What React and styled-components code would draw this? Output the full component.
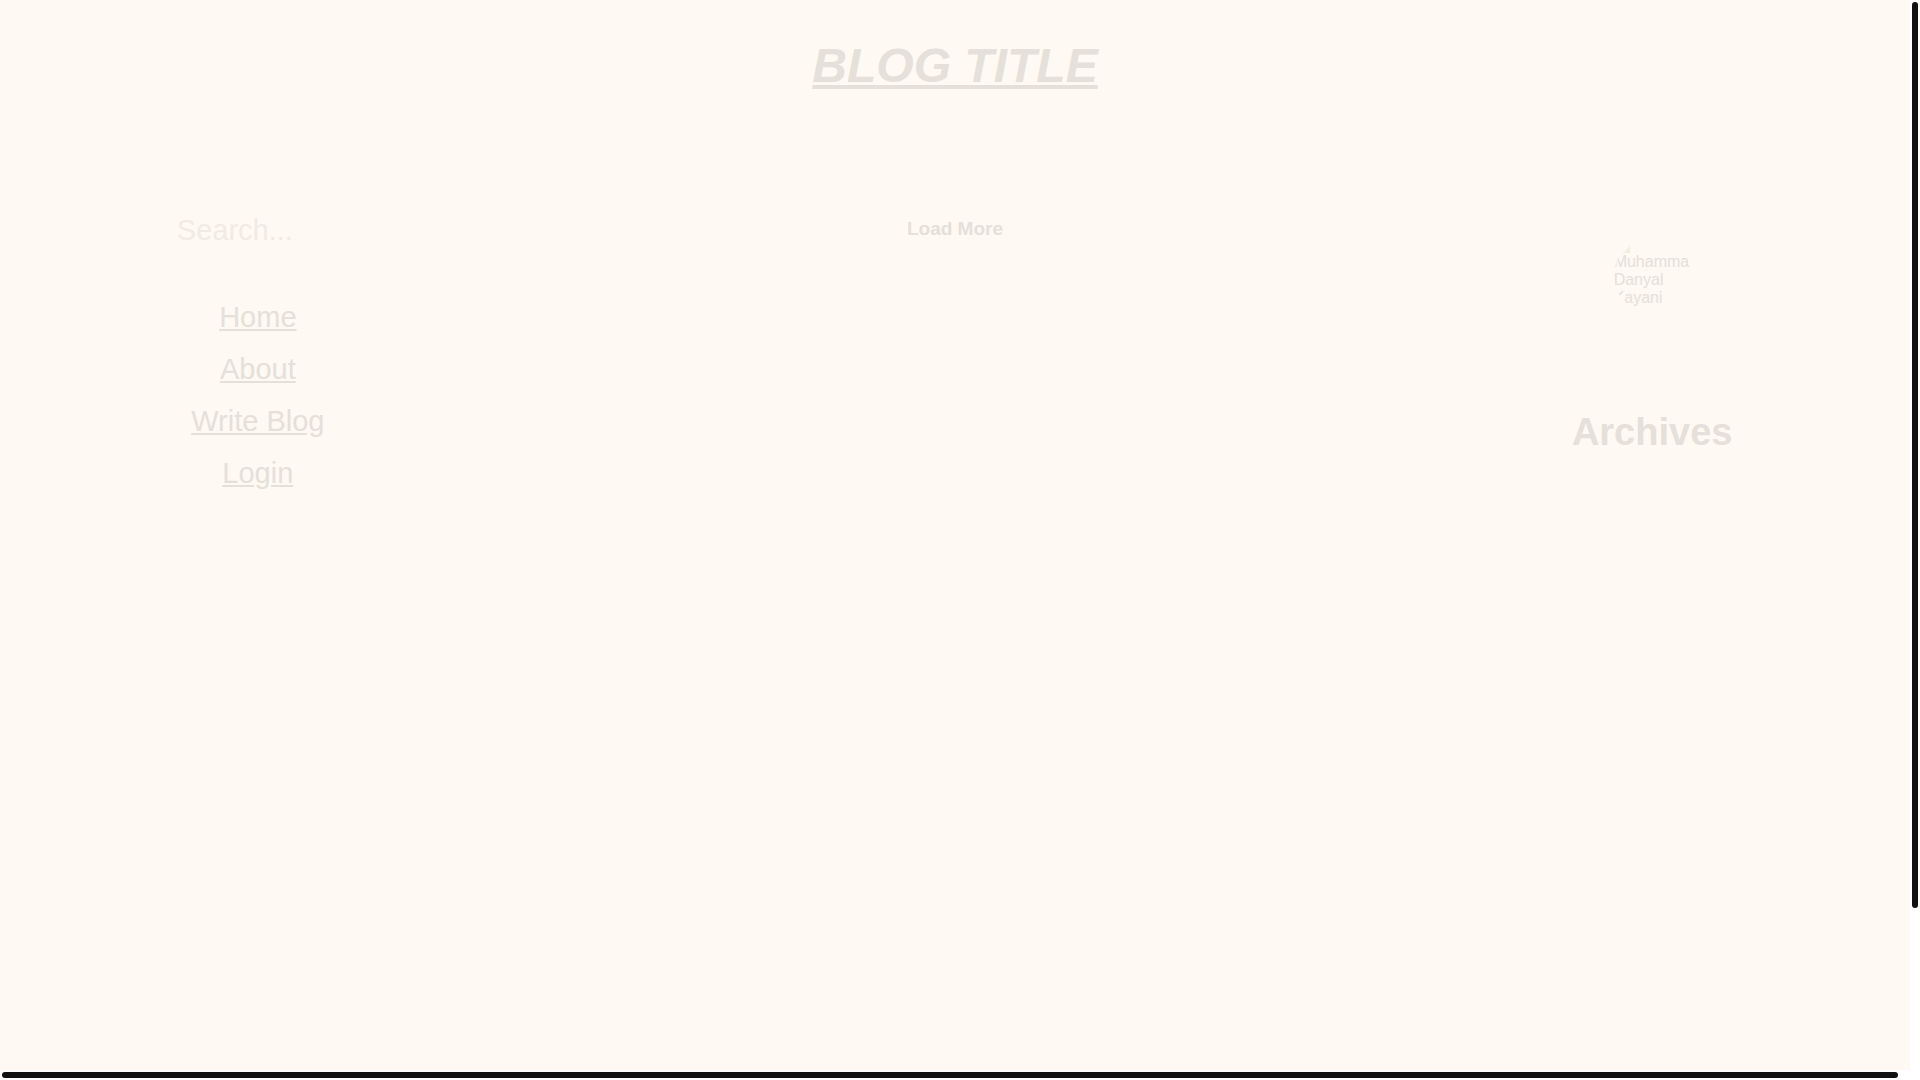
import React from 'react';
import styled, { createGlobalStyle } from 'styled-components';

const GlobalStyle = createGlobalStyle`
    * {
        box-sizing: border-box;
    }

    body {
        margin: 0;
        background-color: #fff;
        color: #e5e0da;
        font-family: "Liberation Sans", Arial, sans-serif;
        font-size: 16px;
    }
`;

// Styled Components
const Window = styled.div`
    display: grid;
    grid-template-columns: 1fr 10px;
    grid-template-rows: 1fr 10px;
    height: 100vh;
`;

const Page = styled.div`
    background-color: #fef9f2;
    overflow: hidden;
`;

const ScrollTrack = styled.div`
    padding: 2px;
`;

const ScrollThumb = styled.div`
    width: ${props => props.$horizontal ? '99.5%' : '100%'};
    height: ${props => props.$horizontal ? '100%' : '85%'};
    border-radius: 3px;
    background-color: #111;
`;

const Header = styled.header`
    padding: 38px 0 116px;
    text-align: center;
`;

const Title = styled.h1`
    margin: 0;
    font-size: 48px;
    font-style: italic;
    line-height: 56px;
    text-decoration: underline;
`;

const Columns = styled.div`
    display: grid;
    grid-template-columns: 27fr 46fr 27fr;
`;

const Sidebar = styled.aside`
    display: flex;
    flex-direction: column;
    align-items: center;
`;

const SearchInput = styled.input`
    width: 178px;
    height: 40px;
    padding: 0 8px;
    border: 0;
    outline: 0;
    background: transparent;
    color: inherit;
    font-family: inherit;
    font-size: 29px;

    &::placeholder {
        color: #f0ebe5;
        opacity: 1;
    }
`;

const NavLinks = styled.ul`
    display: flex;
    flex-direction: column;
    align-items: center;
    gap: 19px;
    list-style: none;
    margin: 51px 0 0;
    padding: 0;
    font-size: 29px;
    line-height: 33px;

    a {
        color: inherit;
    }
`;

const Posts = styled.main`
    display: flex;
    justify-content: center;
    align-items: flex-start;
    padding-top: 7px;
`;

const LoadButton = styled.button`
    padding: 0 16px;
    border: 0;
    background: transparent;
    color: inherit;
    cursor: pointer;
    font-family: inherit;
    font-size: 19px;
    font-weight: bold;
    line-height: 24px;
`;

const Avatar = styled.div`
    width: 77px;
    height: 77px;
    margin: 27px 0 96px;
    border-radius: 50%;
    overflow: hidden;
    line-height: 18px;

    svg {
        display: block;
    }
`;

const ArchivesTitle = styled.h2`
    margin: 0;
    font-size: 38px;
    line-height: 44px;
`;

const PictureIcon = () => (
    <svg width="16" height="16" viewBox="0 0 16 16" aria-hidden="true">
        <path d="M1 1h10l4 4v10H1z" fill="#fefaf0" />
        <path d="M11 1v4h4z" fill="#fbf7ed" />
        <path d="M9 16l7-7v7z" fill="#f0efe1" />
    </svg>
);

const links = ['Home', 'About', 'Write Blog', 'Login'];

export default function App() {
    return (
        <Window>
            <GlobalStyle />
            <Page>
                <Header>
                    <Title>BLOG TITLE</Title>
                </Header>
                <Columns>
                    <Sidebar>
                        <SearchInput type="text" placeholder="Search..." aria-label="Search" />
                        <nav>
                            <NavLinks>
                                {links.map(link => (
                                    <li key={link}><a href="#">{link}</a></li>
                                ))}
                            </NavLinks>
                        </nav>
                    </Sidebar>
                    <Posts>
                        <LoadButton type="button">Load More</LoadButton>
                    </Posts>
                    <Sidebar>
                        <Avatar>
                            <PictureIcon />
                            Muhammad Danyal Kayani
                        </Avatar>
                        <ArchivesTitle>Archives</ArchivesTitle>
                    </Sidebar>
                </Columns>
            </Page>
            <ScrollTrack>
                <ScrollThumb />
            </ScrollTrack>
            <ScrollTrack>
                <ScrollThumb $horizontal />
            </ScrollTrack>
        </Window>
    );
}
